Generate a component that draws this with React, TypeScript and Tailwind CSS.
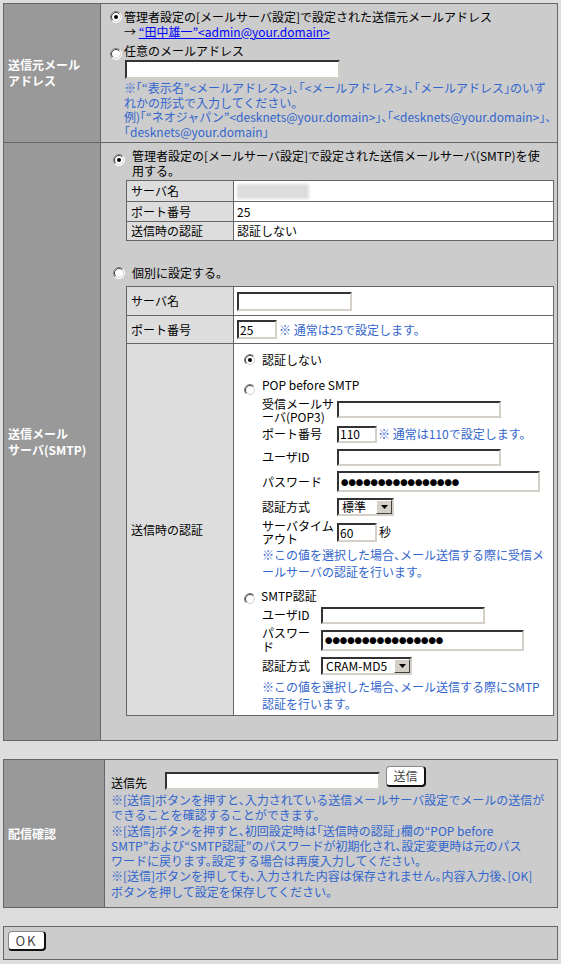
import type { ReactNode } from 'react';

const sunken =
  'border-2 border-t-[#333] border-l-[#333] border-r-[#d4d0c8] border-b-[#d4d0c8] bg-white';

const Radio = ({ checked = false, className = '' }: { checked?: boolean; className?: string }) => (
  <svg width="12" height="12" viewBox="0 0 12 12" className={`shrink-0 ${className}`}>
    <circle cx="6" cy="6" r="5.5" fill="#fff" />
    <path d="M9.9 2.1A5.5 5.5 0 0 0 2.1 9.9" fill="none" stroke="#808080" />
    <path d="M9.2 2.8A4.5 4.5 0 0 0 2.8 9.2" fill="none" stroke="#404040" />
    <path d="M2.1 9.9A5.5 5.5 0 0 0 9.9 2.1" fill="none" stroke="#fff" />
    <path d="M2.8 9.2A4.5 4.5 0 0 0 9.2 2.8" fill="none" stroke="#d4d0c8" />
    {checked && <circle cx="6" cy="6" r="2" fill="#000" />}
  </svg>
);

const TextBox = ({ className = '', value = '' }: { className?: string; value?: string }) => (
  <input
    readOnly
    defaultValue={value}
    className={`box-border shrink-0 px-[1px] text-[12px] text-black outline-none ${sunken} ${className}`}
  />
);

const Password = ({ className = '' }: { className?: string }) => (
  <div className={`box-border flex shrink-0 items-center pl-[2px] ${sunken} ${className}`}>
    <span className="text-[7.4px] leading-none">●●●●●●●●●●●●●●●●</span>
  </div>
);

const Select = ({ value, className = '' }: { value: string; className?: string }) => (
  <div className={`box-border flex h-[18px] shrink-0 items-center ${sunken} ${className}`}>
    <span className="flex-1 pl-[3px] leading-[14px] whitespace-nowrap">{value}</span>
    <span className="box-border flex h-[14px] w-[16px] items-center justify-center border border-t-white border-l-white border-r-[#404040] border-b-[#404040] bg-[#d4d0c8]">
      <svg width="7" height="4" viewBox="0 0 7 4">
        <path d="M0 0h7L3.5 4z" fill="#000" />
      </svg>
    </span>
  </div>
);

const Button = ({ children, className = '' }: { children: ReactNode; className?: string }) => (
  <button className={`box-border flex items-center justify-center rounded-[4px] border border-t-[#888] border-l-[#888] border-r-2 border-b-2 border-r-[#111] border-b-[#111] bg-white text-[#444] ${className}`}>
    {children}
  </button>
);

const Head = ({ children, className = '' }: { children: ReactNode; className?: string }) => (
  <div className={`flex shrink-0 items-center bg-[#999999] pl-[4px] font-bold leading-[16px] text-white ${className}`}>
    <div>{children}</div>
  </div>
);

const SubRow = ({ className, labelClass, label, children }: { className: string; labelClass: string; label: ReactNode; children: ReactNode }) => (
  <div className={`flex items-center ${className}`}>
    <div className={`shrink-0 whitespace-nowrap ${labelClass}`}>{label}</div>
    {children}
  </div>
);

export default function App() {
  return (
    <div className="min-h-[964px] w-[561px] bg-[#dddddd] px-[3px] pt-[3px] font-['Noto_Sans_CJK_JP',sans-serif] text-[12px] text-black [font-feature-settings:'halt']">
      {/* 送信元メールアドレス / 送信メールサーバ */}
      <div className="w-[555px] border border-[#666]">
        <div className="flex h-[138px]">
          <Head className="w-[96px]">
            送信元メール
            <br />
            アドレス
          </Head>
          <div className="flex-1 border-l border-[#666] bg-[#cccccc] pl-[9px] pt-[5px]">
            <div className="flex leading-[15px]">
              <Radio checked className="mt-[2px]" />
              <div className="ml-[2px] whitespace-nowrap">
                管理者設定の[メールサーバ設定]で設定された送信元メールアドレス
                <br />→ <span className="text-[#0000ff] underline">“田中雄一”&lt;admin@your.domain&gt;</span>
              </div>
            </div>
            <div className="mt-[4px] flex">
              <Radio className="mt-[5px]" />
              <div className="ml-[2px]">
                <div className="leading-[15px]">任意のメールアドレス</div>
                <TextBox className="ml-[1px] mt-[2px] h-[19px] w-[215px]" />
                <div className="mt-[2px] whitespace-nowrap leading-[14.5px] text-[#3366cc]">
                  ※「“表示名”&lt;メールアドレス&gt;」、「&lt;メールアドレス&gt;」、「メールアドレス」のいず
                  <br />
                  れかの形式で入力してください。
                  <br />
                  例)「“ネオジャパン”&lt;desknets@your.domain&gt;」、「&lt;desknets@your.domain&gt;」、
                  <br />
                  「desknets@your.domain」
                </div>
              </div>
            </div>
          </div>
        </div>

        <div className="flex h-[598px] border-t border-[#666]">
          <Head className="w-[96px]">
            送信メール
            <br />
            サーバ(SMTP)
          </Head>
          <div className="flex-1 border-l border-[#666] bg-[#cccccc] pt-[5px]">
            <div className="flex pl-[12px] leading-[15px]">
              <Radio checked className="mt-[6px]" />
              <div className="ml-[7px] whitespace-nowrap">
                管理者設定の[メールサーバ設定]で設定された送信メールサーバ(SMTP)を使
                <br />
                用する。
              </div>
            </div>

            <div className="ml-[25px] mr-[3px] mt-[2px] border border-[#666]">
              {[
                ['サーバ名', null, 'h-[20px]'],
                ['ポート番号', '25', 'h-[20px] border-t border-[#666]'],
                ['送信時の認証', '認証しない', 'h-[19px] border-t border-[#666]'],
              ].map(([label, value, cls]) => (
                <div key={label as string} className={`flex ${cls}`}>
                  <div className="flex w-[106px] items-center bg-[#dddddd] pl-[4px]">{label}</div>
                  <div className="flex flex-1 items-center border-l border-[#666] bg-white pl-[3px]">
                    {value ?? <div className="h-[15px] w-[72px] bg-[#dcdcdc] blur-[1.5px]" />}
                  </div>
                </div>
              ))}
            </div>

            <div className="mt-[24px] flex pl-[12px] leading-[15px]">
              <Radio className="mt-[2px]" />
              <div className="ml-[7px]">個別に設定する。</div>
            </div>

            <div className="ml-[25px] mr-[3px] mt-[6px] border border-[#666]">
              <div className="flex h-[28px]">
                <div className="flex w-[106px] items-center bg-[#dddddd] pl-[4px]">サーバ名</div>
                <div className="flex flex-1 items-center border-l border-[#666] bg-white pl-[3px]">
                  <TextBox className="h-[19px] w-[115px]" />
                </div>
              </div>
              <div className="flex h-[28px] border-t border-[#666]">
                <div className="flex w-[106px] items-center bg-[#dddddd] pl-[4px]">ポート番号</div>
                <div className="flex flex-1 items-center border-l border-[#666] bg-white pl-[3px]">
                  <TextBox className="h-[19px] w-[40px]" value="25" />
                  <span className="ml-[2px] text-[#3366cc]">※ 通常は25で設定します。</span>
                </div>
              </div>
              <div className="flex h-[372px] border-t border-[#666]">
                <div className="flex w-[106px] items-center bg-[#dddddd] pl-[4px]">送信時の認証</div>
                <div className="flex-1 border-l border-[#666] bg-white pl-[10px] pt-[8px]">
                  <div className="flex h-[15px] leading-[15px]">
                    <Radio checked className="mt-[2px]" />
                    <span className="ml-[6px]">認証しない</span>
                  </div>

                  <div className="mt-[10px] flex h-[20px] leading-[15px]">
                    <Radio className="mt-[7px]" />
                    <span className="ml-[6px]">POP before SMTP</span>
                  </div>
                  <div className="pl-[18px]">
                    <SubRow
                      className="h-[25px]"
                      labelClass="w-[75px] leading-[13px]"
                      label={
                        <>
                          受信メールサ
                          <br />
                          ーバ(POP3)
                        </>
                      }
                    >
                      <TextBox className="h-[17px] w-[164px]" />
                    </SubRow>
                    <SubRow className="h-[24px]" labelClass="w-[75px]" label="ポート番号">
                      <TextBox className="h-[17px] w-[40px]" value="110" />
                      <span className="ml-[1px] text-[#3366cc]">※ 通常は110で設定します。</span>
                    </SubRow>
                    <SubRow className="h-[22px]" labelClass="w-[75px]" label="ユーザID">
                      <TextBox className="h-[17px] w-[164px]" />
                    </SubRow>
                    <SubRow className="h-[27px]" labelClass="w-[75px]" label="パスワード">
                      <Password className="h-[21px] w-[203px]" />
                    </SubRow>
                    <SubRow className="h-[24px]" labelClass="w-[75px]" label="認証方式">
                      <Select value="標準" className="w-[57px]" />
                    </SubRow>
                    <SubRow
                      className="h-[26px]"
                      labelClass="w-[75px] leading-[13px]"
                      label={
                        <>
                          サーバタイム
                          <br />
                          アウト
                        </>
                      }
                    >
                      <TextBox className="h-[19px] w-[40px]" value="60" />
                      <span className="ml-[2px]">秒</span>
                    </SubRow>
                    <div className="mt-[1px] whitespace-nowrap leading-[17px] text-[#3366cc]">
                      ※この値を選択した場合、メール送信する際に受信メ
                      <br />
                      ールサーバの認証を行います。
                    </div>
                  </div>

                  <div className="mt-[8px] flex h-[16px] leading-[15px]">
                    <Radio className="mt-[5px]" />
                    <span className="ml-[5px]">SMTP認証</span>
                  </div>
                  <div className="pl-[18px]">
                    <SubRow className="h-[22px]" labelClass="w-[59px]" label="ユーザID">
                      <TextBox className="h-[17px] w-[164px]" />
                    </SubRow>
                    <SubRow
                      className="h-[28px]"
                      labelClass="w-[59px] leading-[14px]"
                      label={
                        <>
                          パスワー
                          <br />
                          ド
                        </>
                      }
                    >
                      <Password className="h-[21px] w-[203px]" />
                    </SubRow>
                    <SubRow className="h-[24px]" labelClass="w-[59px]" label="認証方式">
                      <Select value="CRAM-MD5" className="w-[91px]" />
                    </SubRow>
                    <div className="whitespace-nowrap leading-[17px] text-[#3366cc]">
                      ※この値を選択した場合、メール送信する際にSMTP
                      <br />
                      認証を行います。
                    </div>
                  </div>
                </div>
              </div>
            </div>
          </div>
        </div>
      </div>

      {/* 配信確認 */}
      <div className="mt-[18px] flex h-[149px] w-[555px] border border-[#666]">
        <Head className="w-[100px]">配信確認</Head>
        <div className="flex-1 border-l border-[#666] bg-[#cccccc] pl-[6px] pt-[6px]">
          <div className="flex items-start">
            <span className="mt-[9px] leading-[15px]">送信先</span>
            <TextBox className="ml-[18px] mt-[6px] h-[18px] w-[215px]" />
            <Button className="ml-[6px] h-[21px] w-[40px]">送信</Button>
          </div>
          <div className="mt-[2px] whitespace-nowrap leading-[15.3px] text-[#3366cc]">
            ※[送信]ボタンを押すと、入力されている送信メールサーバ設定でメールの送信が
            <br />
            できることを確認することができます。
            <br />
            ※[送信]ボタンを押すと、初回設定時は「送信時の認証」欄の“POP before
            <br />
            SMTP”および“SMTP認証”のパスワードが初期化され、設定変更時は元のパス
            <br />
            ワードに戻ります。設定する場合は再度入力してください。
            <br />
            ※[送信]ボタンを押しても、入力された内容は保存されません。内容入力後、[OK]
            <br />
            ボタンを押して設定を保存してください。
          </div>
        </div>
      </div>

      {/* OK */}
      <div className="mt-[18px] h-[34px] w-[555px] border border-[#666] bg-[#cccccc] pl-[4px] pt-[4px]">
        <Button className="h-[20px] w-[38px] text-[13px] tracking-[2px]">OK</Button>
      </div>
    </div>
  );
}
